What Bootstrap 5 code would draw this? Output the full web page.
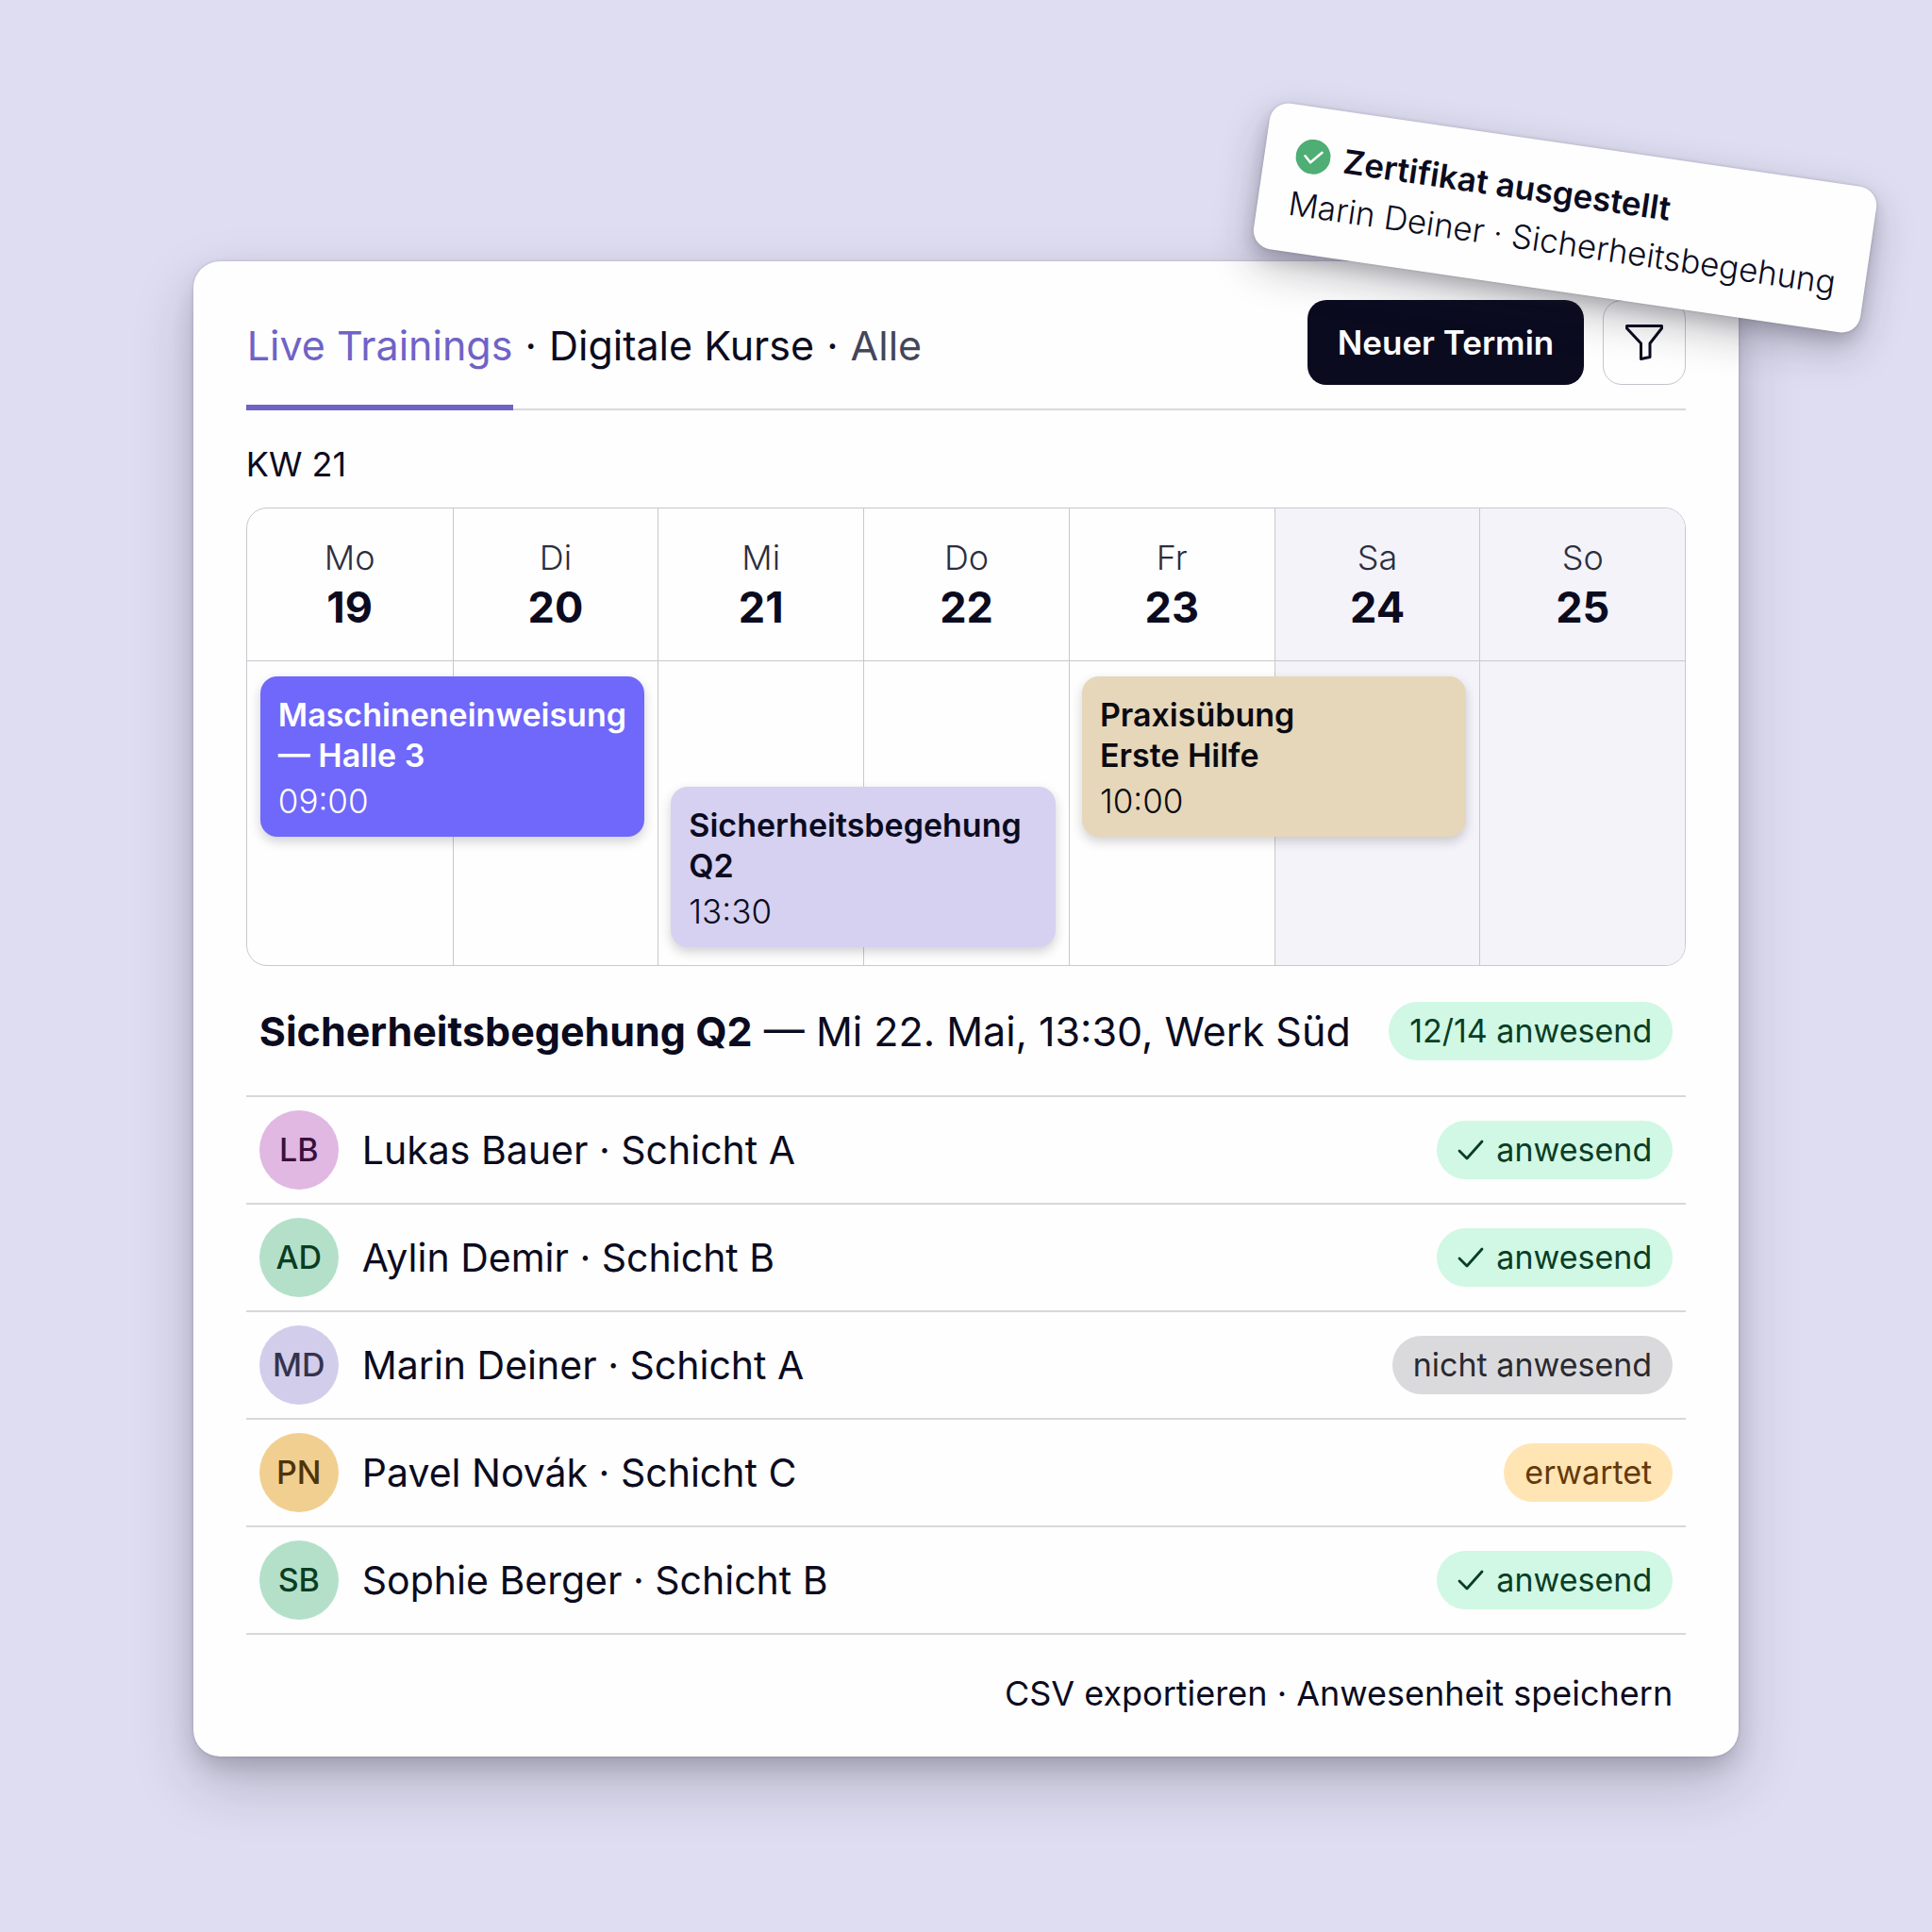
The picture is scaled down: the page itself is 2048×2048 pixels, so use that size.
<!DOCTYPE html>
<html lang="de">
<head>
<meta charset="utf-8">
<meta name="viewport" content="width=device-width, initial-scale=1">
<title>Live Trainings</title>
<link href="https://cdn.jsdelivr.net/npm/bootstrap@5.3.0/dist/css/bootstrap.min.css" rel="stylesheet">
<style>
  :root { --ink: #0b0b20; --line: #d8d8dc; --grid: #c8c8ce; --violet: #6f63c6; }
  body { background: #dfddf1; color: var(--ink); font-family: Inter, "Liberation Sans", sans-serif; font-size: 36px; line-height: 44px; min-height: 100vh; }
  a { color: inherit; text-decoration: none; }
  .stage { padding: 277px 10% 60px; }
  .panel { background: #fefefe; border-radius: 28px; padding: 41px 56px 44px; box-shadow: 0 0 3px rgba(30,28,44,.2), 0 12px 24px -4px rgba(30,28,44,.2), 0 28px 64px rgba(30,28,44,.22); }

  .topbar { border-bottom: 2px solid var(--line); font-size: 43px; }
  .tabs a { display: inline-block; padding: 21px 1px 36px; line-height: 54px; margin-bottom: -2px; border-bottom: 6px solid transparent; }
  .tabs a.active { color: var(--violet); border-color: var(--violet); }
  .tabs .muted-tab { color: #44465a; }
  .btn-new { background: var(--ink); color: #fff; font-size: 35px; font-weight: 600; line-height: 44px; padding: 23px 32px; border: 0; border-radius: 20px; }
  .btn-new:hover { background: #22223c; color: #fff; }
  .btn-filter { width: 88px; height: 90px; padding: 0; border: 1px solid #c4c4cc; border-radius: 20px; }
  .week { font-size: 36px; line-height: 44px; padding: 35px 0 24px; }

  .cal { border: 1px solid var(--grid); border-radius: 22px; overflow: hidden; }
  .cal-row { display: grid; grid-template-columns: repeat(7, minmax(0, 1fr)); }
  .cal-head { border-bottom: 1px solid var(--grid); }
  .cal-cell { grid-row: 1; border-left: 1px solid var(--grid); }
  .cal-cell:nth-child(1) { grid-column: 1; border-left: 0; }
  .cal-cell:nth-child(2) { grid-column: 2; }
  .cal-cell:nth-child(3) { grid-column: 3; }
  .cal-cell:nth-child(4) { grid-column: 4; }
  .cal-cell:nth-child(5) { grid-column: 5; }
  .cal-cell:nth-child(6) { grid-column: 6; }
  .cal-cell:nth-child(7) { grid-column: 7; }
  .weekend { background: #f4f3f9; }
  .day { padding: 28px 0; text-align: center; }
  .day-name { font-size: 36px; line-height: 48px; font-weight: 300; color: #2c2e40; }
  .day-num { font-size: 45px; line-height: 57px; font-weight: 700; }
  .slots { min-height: 322px; }
  .event { grid-row: 1; align-self: start; z-index: 1; margin: 16px 14px 0; padding: 19px 19px 15px; border-radius: 18px; font-size: 34px; font-weight: 600; line-height: 43px; box-shadow: 0 5px 12px rgba(30,30,50,.2); }
  .event time { display: block; font-size: 35px; font-weight: 300; line-height: 46px; padding-top: 4px; }
  .event-late { margin-top: 133px; }
  .ev-1 { grid-column: 1 / span 2; background: #6f68fb; color: #fff; }
  .ev-2 { grid-column: 3 / span 2; background: #d6d1f0; }
  .ev-3 { grid-column: 5 / span 2; background: #e6d7ba; color: #0b0b12; }

  .session { font-size: 43px; line-height: 54px; padding: 38px 14px 37px; border-bottom: 2px solid var(--line); }
  .session h1 { font-size: inherit; line-height: inherit; font-weight: 400; white-space: nowrap; }
  .session strong { font-weight: 700; }
  .people li { padding: 14px; border-bottom: 2px solid var(--line); font-size: 41px; line-height: 52px; }
  .avatar { width: 84px; height: 84px; font-size: 34px; font-weight: 500; flex: none; margin-right: 25px; }
  .av-pink { background: #e0b8e2; color: #38113a; }
  .av-green { background: #b4e0ca; color: #0a3d22; }
  .av-violet { background: #d2cdeb; color: #35334c; }
  .av-amber { background: #f1cf90; color: #503408; }
  .pill { font-size: 34px; line-height: 42px; padding: 10px 22px; border-radius: 31px; white-space: nowrap; }
  .pill svg { margin-right: 13px; }
  .pill-yes { background: #d0f8e4; color: #0a3d26; }
  .pill-no { background: #dadadd; color: #2a2a30; }
  .pill-wait { background: #fee5b3; color: #66390a; }
  .actions { padding: 39px 14px 0; font-size: 36px; line-height: 46px; }

  .notice { position: absolute; top: -124px; right: -141px; z-index: 3; width: 650px; padding: 26px 33px; background: #fefefe; border-radius: 20px; transform: rotate(8.3deg); font-size: 35px; line-height: 52px; white-space: nowrap; box-shadow: 0 0 3px rgba(30,28,44,.2), 0 8px 16px rgba(30,28,44,.16), 0 18px 44px rgba(30,28,44,.28); }
  .notice svg { margin-right: 14px; }
  .notice strong { font-weight: 600; }
  .notice p { font-weight: 300; }
</style>
</head>
<body>
<main class="stage">
  <section class="panel position-relative">
    <header class="topbar d-flex justify-content-between align-items-start">
      <nav class="tabs">
        <a class="active" href="#live">Live Trainings</a>
        <span>·</span>
        <a href="#kurse">Digitale Kurse</a>
        <span>·</span>
        <a class="muted-tab" href="#alle">Alle</a>
      </nav>
      <div class="d-flex">
        <button type="button" class="btn btn-new me-3">Neuer Termin</button>
        <button type="button" class="btn btn-filter d-flex align-items-center justify-content-center ms-1" aria-label="Filter">
          <svg width="40" height="38" viewBox="0 0 40 38" fill="none" stroke="#0b0b20" stroke-width="3" stroke-linejoin="round"><path d="M1.500 1.500H38.500V4L26 20V34.500L16.500 36.500V20L1.500 4Z"/></svg>
        </button>
      </div>
    </header>

    <div class="week">KW 21</div>

    <div class="cal">
      <div class="cal-row cal-head">
        <div class="cal-cell day"><div class="day-name">Mo</div><div class="day-num">19</div></div>
        <div class="cal-cell day"><div class="day-name">Di</div><div class="day-num">20</div></div>
        <div class="cal-cell day"><div class="day-name">Mi</div><div class="day-num">21</div></div>
        <div class="cal-cell day"><div class="day-name">Do</div><div class="day-num">22</div></div>
        <div class="cal-cell day"><div class="day-name">Fr</div><div class="day-num">23</div></div>
        <div class="cal-cell day weekend"><div class="day-name">Sa</div><div class="day-num">24</div></div>
        <div class="cal-cell day weekend"><div class="day-name">So</div><div class="day-num">25</div></div>
      </div>
      <div class="cal-row slots">
        <div class="cal-cell"></div>
        <div class="cal-cell"></div>
        <div class="cal-cell"></div>
        <div class="cal-cell"></div>
        <div class="cal-cell"></div>
        <div class="cal-cell weekend"></div>
        <div class="cal-cell weekend"></div>
        <article class="event ev-1">Maschineneinweisung<br>— Halle 3 <time>09:00</time></article>
        <article class="event event-late ev-2">Sicherheitsbegehung<br>Q2 <time>13:30</time></article>
        <article class="event ev-3">Praxisübung<br>Erste Hilfe <time>10:00</time></article>
      </div>
    </div>

    <div class="session d-flex justify-content-between align-items-center">
      <h1 class="m-0"><strong>Sicherheitsbegehung Q2</strong> — Mi 22. Mai, 13:30, Werk Süd</h1>
      <span class="pill pill-yes">12/14 anwesend</span>
    </div>

    <ul class="people list-unstyled m-0">
      <li class="d-flex align-items-center">
        <span class="avatar av-pink rounded-circle d-flex align-items-center justify-content-center">LB</span>
        <span class="me-auto">Lukas Bauer · Schicht A</span>
        <span class="pill pill-yes d-flex align-items-center"><svg width="28" height="24" viewBox="0 0 28 24" fill="none" stroke="currentColor" stroke-width="2.800" stroke-linecap="round" stroke-linejoin="round"><path d="M2 13L10 21L26 3"/></svg>anwesend</span>
      </li>
      <li class="d-flex align-items-center">
        <span class="avatar av-green rounded-circle d-flex align-items-center justify-content-center">AD</span>
        <span class="me-auto">Aylin Demir · Schicht B</span>
        <span class="pill pill-yes d-flex align-items-center"><svg width="28" height="24" viewBox="0 0 28 24" fill="none" stroke="currentColor" stroke-width="2.800" stroke-linecap="round" stroke-linejoin="round"><path d="M2 13L10 21L26 3"/></svg>anwesend</span>
      </li>
      <li class="d-flex align-items-center">
        <span class="avatar av-violet rounded-circle d-flex align-items-center justify-content-center">MD</span>
        <span class="me-auto">Marin Deiner · Schicht A</span>
        <span class="pill pill-no">nicht anwesend</span>
      </li>
      <li class="d-flex align-items-center">
        <span class="avatar av-amber rounded-circle d-flex align-items-center justify-content-center">PN</span>
        <span class="me-auto">Pavel Novák · Schicht C</span>
        <span class="pill pill-wait">erwartet</span>
      </li>
      <li class="d-flex align-items-center">
        <span class="avatar av-green rounded-circle d-flex align-items-center justify-content-center">SB</span>
        <span class="me-auto">Sophie Berger · Schicht B</span>
        <span class="pill pill-yes d-flex align-items-center"><svg width="28" height="24" viewBox="0 0 28 24" fill="none" stroke="currentColor" stroke-width="2.800" stroke-linecap="round" stroke-linejoin="round"><path d="M2 13L10 21L26 3"/></svg>anwesend</span>
      </li>
    </ul>

    <footer class="actions text-end">
      <a href="#export">CSV exportieren</a> · <a href="#speichern">Anwesenheit speichern</a>
    </footer>

    <aside class="notice" role="status">
      <div class="d-flex align-items-center">
        <svg width="37" height="37" viewBox="0 0 37 37"><circle cx="18.500" cy="18.500" r="18.500" fill="#4fae74"/><path transform="rotate(-8.3 18.5 18.5)" d="M10 17.500L15.500 24.500L28 14" fill="none" stroke="#fff" stroke-width="2.600" stroke-linecap="round" stroke-linejoin="round"/></svg>
        <strong>Zertifikat ausgestellt</strong>
      </div>
      <p class="m-0">Marin Deiner · Sicherheitsbegehung</p>
    </aside>
  </section>
</main>
<script src="https://cdn.jsdelivr.net/npm/bootstrap@5.3.0/dist/js/bootstrap.bundle.min.js"></script>
</body>
</html>
